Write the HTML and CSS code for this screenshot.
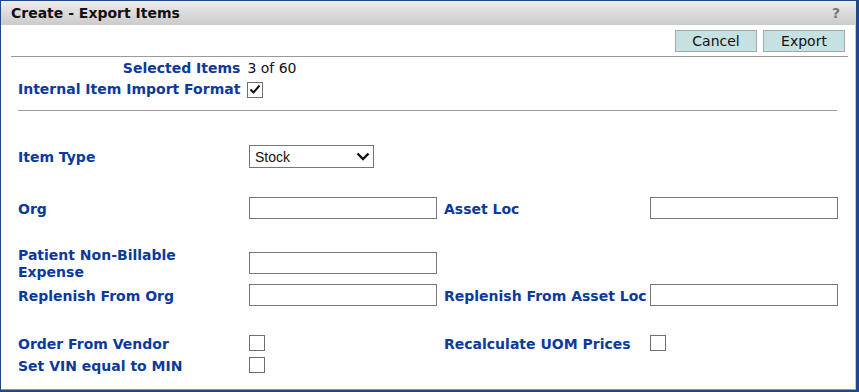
FILE: index.html
```html
<!DOCTYPE html>
<html lang="en">
<head>
  <meta charset="UTF-8" />
  <title>Create - Export Items</title>
  <link rel="stylesheet" href="styles.css">
</head>
<body>
  <div class="dialog">
    <!-- Title bar -->
    <div class="titlebar">
      <span class="title">Create - Export Items</span>
      <span class="help">?</span>
    </div>

    <!-- Action buttons -->
    <div class="actions">
      <button class="btn">Cancel</button>
      <button class="btn">Export</button>
    </div>
    <div class="rule"></div>

    <!-- Summary -->
    <div class="summary">
      <span class="label right">Selected Items</span>
      <span class="value">3 of 60</span>
      <span class="label right">Internal Item Import Format</span>
      <span class="box checked">
        <svg width="12" height="11" viewBox="0 0 12 11"><path d="M1.5 5.5 L4.5 8.5 L10.5 1.5" fill="none" stroke="#111" stroke-width="2"/></svg>
      </span>
    </div>
    <div class="rule inner"></div>

    <!-- Form fields -->
    <div class="form">
      <div class="row r-type">
        <span class="label">Item Type</span>
        <div class="select">
          <span>Stock</span>
          <svg width="14" height="9" viewBox="0 0 14 9"><path d="M1.5 1.5 L7 7 L12.5 1.5" fill="none" stroke="#111" stroke-width="2.4"/></svg>
        </div>
      </div>

      <div class="row r-org">
        <span class="label">Org</span>
        <input class="field" type="text">
        <span class="label">Asset Loc</span>
        <input class="field" type="text">
      </div>

      <div class="row r-patient">
        <span class="label">Patient Non-Billable<br>Expense</span>
        <input class="field" type="text">
      </div>

      <div class="row r-replenish">
        <span class="label">Replenish From Org</span>
        <input class="field" type="text">
        <span class="label">Replenish From Asset Loc</span>
        <input class="field" type="text">
      </div>

      <div class="row r-vendor">
        <span class="label">Order From Vendor</span>
        <span class="box"></span>
        <span class="label">Recalculate UOM Prices</span>
        <span class="box"></span>
      </div>

      <div class="row r-vin">
        <span class="label">Set VIN equal to MIN</span>
        <span class="box"></span>
      </div>
    </div>
  </div>
</body>
</html>
```

FILE: styles.css
```css
/* Page */
body {
  margin: 0;
  background: #fff;
  font-family: "DejaVu Sans", Verdana, sans-serif;
  font-size: 14px;
  color: #111;
}
.dialog {
  box-sizing: border-box;
  width: 859px;
  height: 392px;
  border: 1px solid #1b4a86;
  border-right-width: 3px;
  border-bottom-width: 2px;
  box-shadow: inset 0 -1px 0 #9a9a9a, inset -1px 0 0 #c8c8c8;
}
/* Title bar with grey gradient */
.titlebar {
  height: 24px;
  display: flex;
  align-items: center;
  justify-content: space-between;
  padding: 0 16px 0 10px;
  background: linear-gradient(#ececec, #cbcbcb);
}
.title {
  font-weight: bold;
  font-size: 14px;
  color: #111;
}
.help {
  font-weight: bold;
  font-size: 14px;
  color: #777;
}
/* Buttons */
.actions {
  display: flex;
  justify-content: flex-end;
  gap: 6px;
  padding: 5px 11px 0 0;
}
.btn {
  width: 82px;
  height: 22px;
  background: #c6e1e1;
  border: 1px solid #a6a6a6;
  font-family: "DejaVu Sans", Verdana, sans-serif;
  font-size: 14px;
  color: #111;
  padding: 0;
}
.rule {
  height: 1px;
  background: #9a9a9a;
  margin: 4px 8px 0 10px;
}
.rule.inner {
  margin: 12px 19px 0 17px;
}
/* Labels */
.label {
  font-weight: bold;
  color: #0a3a9a;
  line-height: 17px;
}
.label.right {
  text-align: right;
}
.summary {
  display: grid;
  grid-template-columns: max-content max-content;
  column-gap: 7px;
  row-gap: 4px;
  align-items: center;
  padding: 3px 0 0 17px;
}
.value {
  line-height: 17px;
}
/* Checkbox */
.box {
  box-sizing: border-box;
  width: 16px;
  height: 16px;
  border: 1px solid #6f6f6f;
  background: #fff;
  display: flex;
  align-items: center;
  justify-content: center;
}
/* Form rows */
.form {
  padding-left: 17px;
}
.form .label {
  padding-top: 2px;
}
.row {
  display: grid;
  grid-template-columns: 231px 188px 213px 188px;
  align-items: center;
}
.row > .label:nth-child(3) {
  padding-left: 7px;
}
.r-type { margin-top: 34px; height: 22px; }
.r-org { margin-top: 30px; height: 22px; }
.r-patient { margin-top: 26px; height: 34px; }
.r-replenish { margin-top: 5px; height: 22px; }
.r-vendor { margin-top: 26px; height: 22px; }
.r-vin { margin-top: 0; height: 22px; }
.field {
  box-sizing: border-box;
  width: 188px;
  height: 22px;
  margin: 0;
  border: 1px solid #767676;
  background: #fff;
  padding: 0 4px;
}
.select {
  box-sizing: border-box;
  width: 125px;
  height: 23px;
  border: 1px solid #767676;
  display: flex;
  align-items: center;
  justify-content: space-between;
  padding: 0 3px 0 5px;
  font-family: "Liberation Sans", Arial, sans-serif;
  font-size: 14px;
  color: #111;
}
```
